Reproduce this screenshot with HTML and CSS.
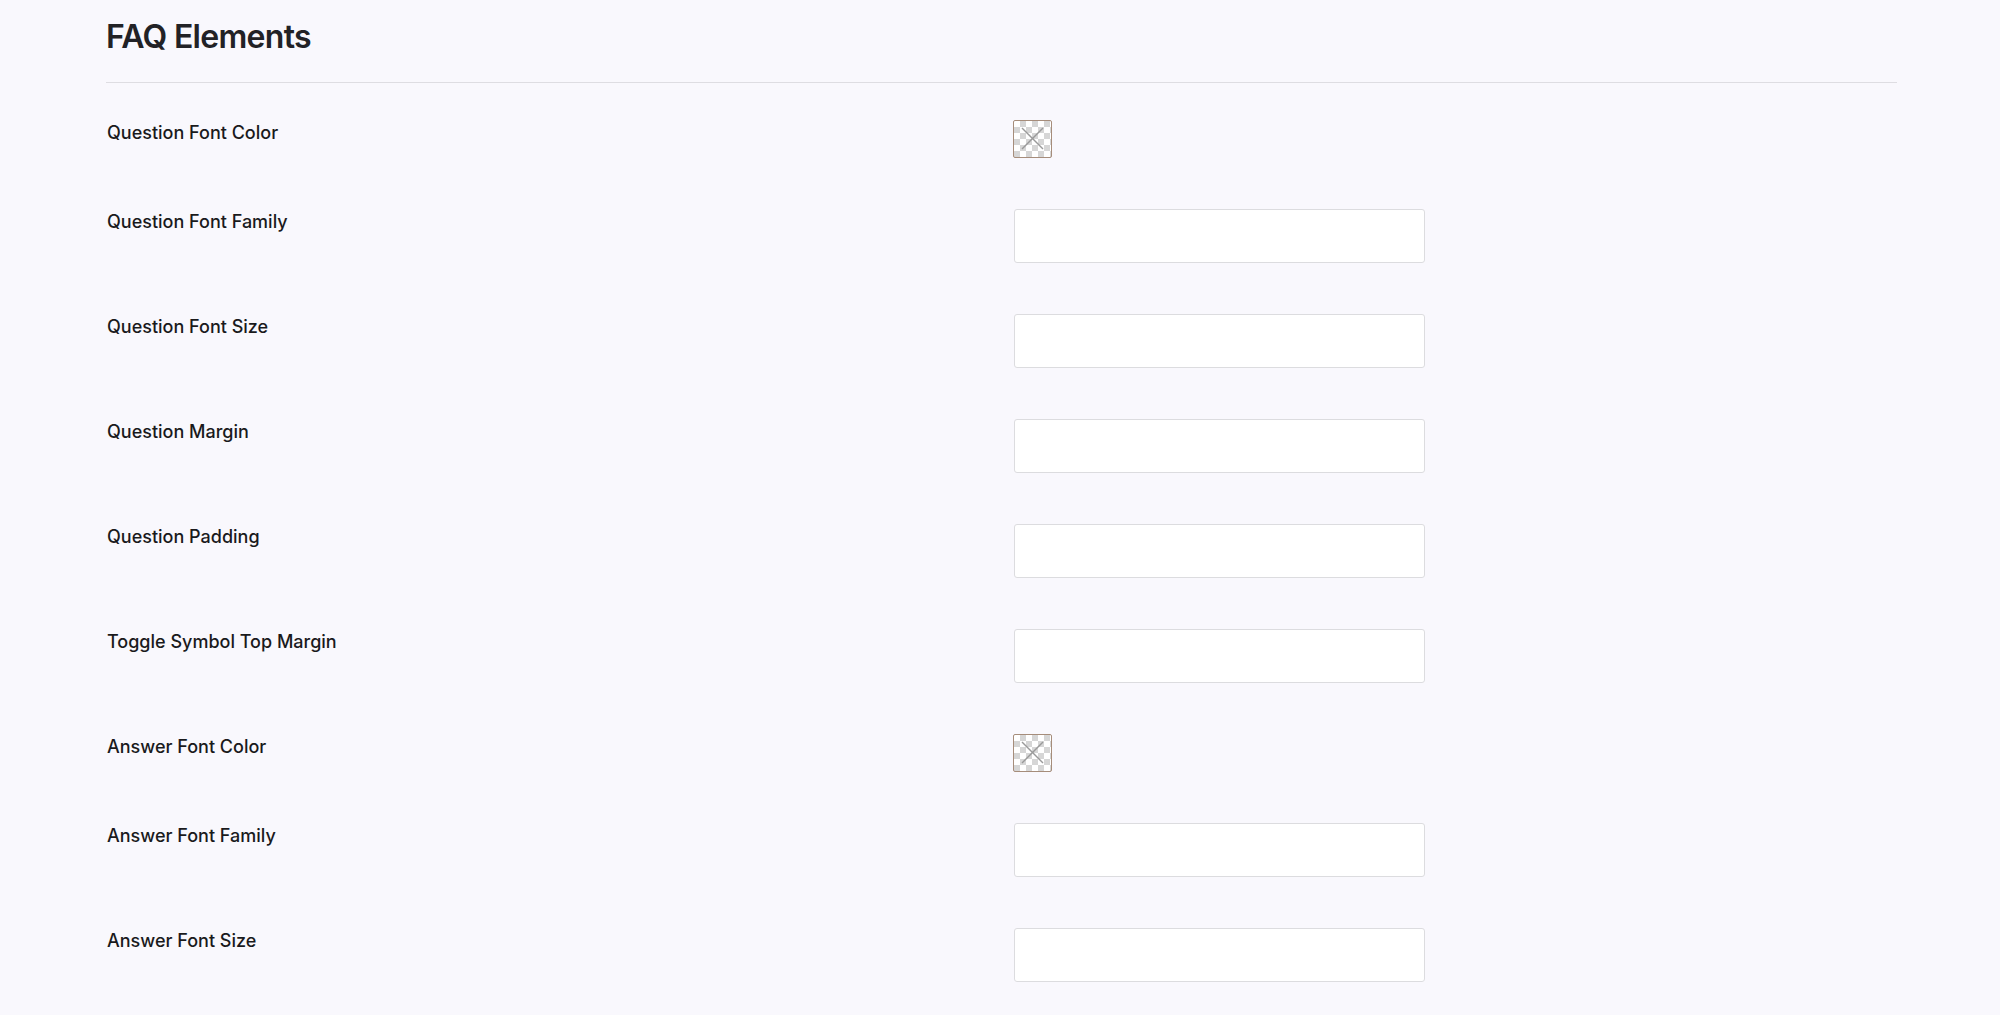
FILE: index.html
```html
<!DOCTYPE html>
<html lang="en">
<head>
<meta charset="utf-8">
<title>FAQ Elements</title>
<link rel="stylesheet" href="styles.css">
</head>
<body>
<div class="wrap">
  <h1 class="title">FAQ Elements</h1>
  <hr class="divider">
  <div class="form">
    <label class="lbl">Question Font Color</label>
    <div class="ctl"><span class="swatch"><svg viewBox="0 0 37 36" width="37" height="36"><line x1="8" y1="7" x2="29" y2="28"/><line x1="29" y1="7" x2="8" y2="28"/></svg></span></div>

    <label class="lbl">Question Font Family</label>
    <div class="ctl"><input class="txt" type="text"></div>

    <label class="lbl">Question Font Size</label>
    <div class="ctl"><input class="txt" type="text"></div>

    <label class="lbl">Question Margin</label>
    <div class="ctl"><input class="txt" type="text"></div>

    <label class="lbl">Question Padding</label>
    <div class="ctl"><input class="txt" type="text"></div>

    <label class="lbl">Toggle Symbol Top Margin</label>
    <div class="ctl"><input class="txt" type="text"></div>

    <label class="lbl">Answer Font Color</label>
    <div class="ctl"><span class="swatch"><svg viewBox="0 0 37 36" width="37" height="36"><line x1="8" y1="7" x2="29" y2="28"/><line x1="29" y1="7" x2="8" y2="28"/></svg></span></div>

    <label class="lbl">Answer Font Family</label>
    <div class="ctl"><input class="txt" type="text"></div>

    <label class="lbl">Answer Font Size</label>
    <div class="ctl"><input class="txt" type="text"></div>
  </div>
</div>
</body>
</html>
```

FILE: styles.css
```css
html, body {
  margin: 0;
  padding: 0;
  background: #f9f8fd;
}
body {
  font-family: Inter, "Noto Sans", "Liberation Sans", sans-serif;
  color: #1d1d1f;
}
.wrap {
  width: 1791px;
  padding-left: 106px;
}
.title {
  margin: 0;
  padding-top: 18px;
  font-size: 32px;
  line-height: 38px;
  font-weight: 600;
  color: #222226;
  letter-spacing: -0.7px;
}
.divider {
  margin: 26px 0 0 0;
  border: 0;
  height: 1px;
  background: #dedde2;
}
.form {
  display: grid;
  grid-template-columns: 907px 1fr;
  row-gap: 51px;
  padding-top: 37px;
  align-items: start;
}
.lbl {
  font-size: 18px;
  line-height: 25px;
  font-weight: 500;
  color: #1a1a1c;
  padding-left: 1px;
}
.ctl {
  display: flex;
}
.swatch {
  display: block;
  box-sizing: border-box;
  width: 39px;
  height: 38px;
  border: 1px solid #a68d7b;
  border-radius: 2px;
  background-color: #fff;
  background-image: conic-gradient(#d6d6d6 25%, transparent 0 50%, #d6d6d6 0 75%, transparent 0);
  background-size: 12px 12px;
  background-position: 0 0;
}
.swatch svg {
  display: block;
}
.swatch line {
  stroke: #9a9a9a;
  stroke-width: 1.4;
}
.txt {
  box-sizing: border-box;
  width: 411px;
  height: 54px;
  margin: 0 0 0 1px;
  border: 1px solid #dcdcdf;
  border-radius: 3px;
  background: #fff;
  font-family: inherit;
  font-size: 16px;
  padding: 0 10px;
  outline: none;
}
```
